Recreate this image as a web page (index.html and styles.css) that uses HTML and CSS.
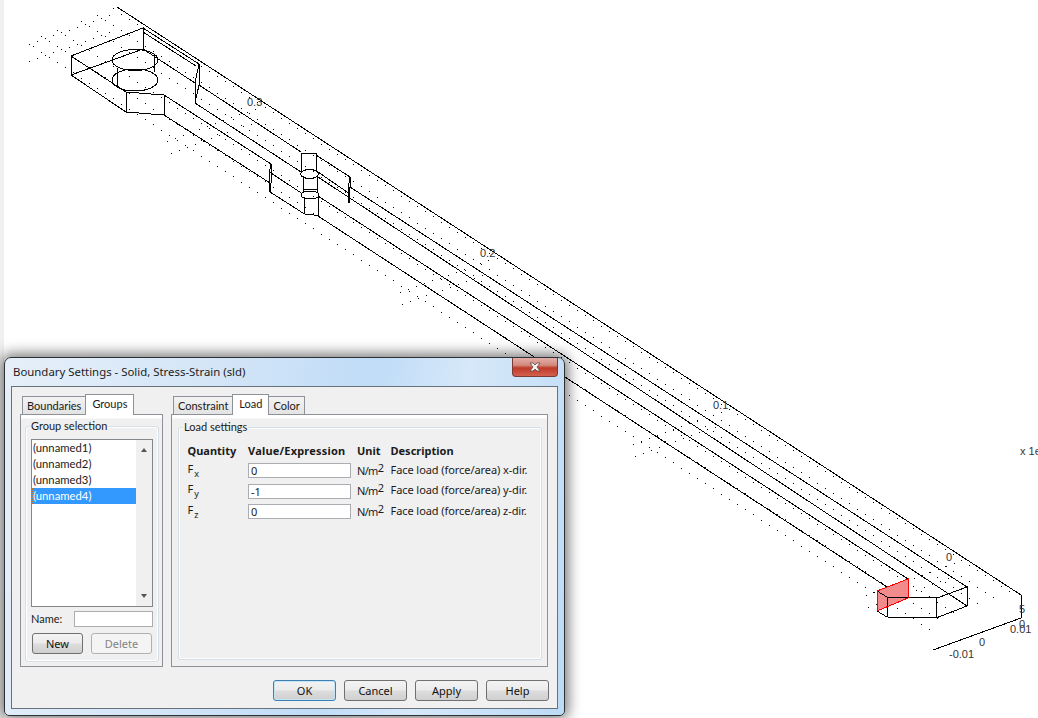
FILE: index.html
```html
<!DOCTYPE html>
<html lang="en">
<head>
<meta charset="utf-8">
<title>Boundary Settings</title>
<link rel="stylesheet" href="styles.css">
</head>
<body>
<main class="stage">
  <svg class="plot" width="1038" height="718" viewBox="0 0 1038 718">
    <path id="grid-dots" class="dots" d=""/>
    <polygon class="face" points="877,591 908,579 908,598 877,611"/>
    <g class="edges">
      <polyline points="117,7 1021,595 1021,618 933,650"/>
      <polygon points="71,56 143,28 143,49 71,75"/>
      <polyline points="71,56 126,92 164,95 164,115 126,112 71,75"/>
      <line x1="126" y1="92" x2="126" y2="112"/>
      <ellipse cx="135" cy="60" rx="23" ry="10.5"/>
      <ellipse cx="135" cy="80" rx="23" ry="11"/>
      <line x1="117" y1="68" x2="117" y2="86"/>
      <line x1="154" y1="55" x2="154" y2="72"/>
      <line x1="143" y1="28" x2="199" y2="64"/>
      <line x1="143" y1="32" x2="196" y2="66"/>
      <line x1="143" y1="49" x2="195" y2="83"/>
      <polygon points="199,64 199,85 195,103 195,83"/>
      <line x1="164" y1="95" x2="271" y2="164"/>
      <line x1="164" y1="115" x2="270" y2="183"/>
      <polygon points="271,164 271,183 270,192 269.500,172"/>
      <line x1="199" y1="85" x2="301" y2="152"/>
      <line x1="195" y1="103" x2="301" y2="172"/>
      <line x1="269.500" y1="172" x2="302" y2="193.500"/>
      <line x1="270" y1="192" x2="304.500" y2="214"/>
      <polyline points="301,172 301,153 316,153.500 316,172"/>
      <ellipse cx="309.500" cy="174" rx="9" ry="4.500"/>
      <line x1="303" y1="176" x2="303" y2="193"/>
      <line x1="317.500" y1="176" x2="317.500" y2="193"/>
      <line x1="303" y1="189" x2="317.500" y2="189"/>
      <ellipse cx="310" cy="195" rx="9" ry="4"/>
      <polyline points="304.500,197 304.500,214 318.500,215.500 318.500,197"/>
      <line x1="316" y1="155" x2="350" y2="177"/>
      <line x1="318" y1="172" x2="348.500" y2="193"/>
      <polygon points="350,177 350,187 349,203 348.500,186"/>
      <line x1="350" y1="187" x2="967" y2="587"/>
      <line x1="318" y1="177" x2="967" y2="606"/>
      <line x1="318" y1="196" x2="908" y2="579"/>
      <line x1="318" y1="216" x2="887" y2="587"/>
      <polyline points="877,591 887,597 937,598 967,587 967,606 936,618 887,617 877,611"/>
      <line x1="887" y1="597" x2="887" y2="617"/>
      <line x1="937" y1="598" x2="936" y2="618"/>
    </g>
    <polygon class="face-edge" points="877,591 908,579 908,598 877,611"/>
    <g class="ticks">
      <text x="247" y="106">0.3</text>
      <text x="480" y="257">0.2</text>
      <text x="713" y="409">0.1</text>
      <text x="946" y="561">0</text>
      <text x="1019" y="613">5</text>
      <text x="1019" y="628">0</text>
      <text x="1010" y="633">0.01</text>
      <text x="979" y="646">0</text>
      <text x="949" y="658">-0.01</text>
      <text x="1020" y="455">x 1e</text>
    </g>
  </svg>

  <section class="window">
    <header class="titlebar">
      <h1 class="title">Boundary Settings - Solid, Stress-Strain (sld)</h1>
      <button class="close" type="button" aria-label="Close">
        <svg width="12" height="10" viewBox="0 0 12 10"><path class="close-x" d="M1 1H4L6 3L8 1H11L8 5L11 9H8L6 7L4 9H1L4 5Z"/></svg>
      </button>
    </header>
    <div class="client">
      <div class="panes">
        <div class="column column-left">
          <div class="tabs">
            <span class="tab">Boundaries</span>
            <span class="tab tab-active">Groups</span>
          </div>
          <div class="pane">
            <div class="group">
              <span class="legend">Group selection</span>
              <div class="list">
                <ul class="items">
                  <li class="item">(unnamed1)</li>
                  <li class="item">(unnamed2)</li>
                  <li class="item">(unnamed3)</li>
                  <li class="item item-selected">(unnamed4)</li>
                </ul>
                <div class="scrollbar">
                  <span class="arrow arrow-up"></span>
                  <span class="arrow arrow-down"></span>
                </div>
              </div>
              <div class="name-row">
                <label class="name-label" for="group-name">Name:</label>
                <input class="field name-field" id="group-name" type="text">
              </div>
              <div class="group-buttons">
                <button class="btn btn-new" type="button">New</button>
                <button class="btn btn-delete" type="button" disabled>Delete</button>
              </div>
            </div>
          </div>
        </div>
        <div class="column column-right">
          <div class="tabs">
            <span class="tab">Constraint</span>
            <span class="tab tab-active">Load</span>
            <span class="tab">Color</span>
          </div>
          <div class="pane">
            <div class="group">
              <span class="legend">Load settings</span>
              <div class="settings">
                <b class="head">Quantity</b><b class="head head-value">Value/Expression</b><b class="head">Unit</b><b class="head">Description</b>
                <span class="qty">F<sub>x</sub></span><input class="field" type="text" value="0"><span class="unit">N/m<sup>2</sup></span><span class="desc">Face load (force/area) x-dir.</span>
                <span class="qty">F<sub>y</sub></span><input class="field" type="text" value="-1"><span class="unit">N/m<sup>2</sup></span><span class="desc">Face load (force/area) y-dir.</span>
                <span class="qty">F<sub>z</sub></span><input class="field" type="text" value="0"><span class="unit">N/m<sup>2</sup></span><span class="desc">Face load (force/area) z-dir.</span>
              </div>
            </div>
          </div>
        </div>
      </div>
      <div class="actions">
        <button class="btn btn-action btn-default" type="button">OK</button>
        <button class="btn btn-action" type="button">Cancel</button>
        <button class="btn btn-action" type="button">Apply</button>
        <button class="btn btn-action" type="button">Help</button>
      </div>
    </div>
  </section>
</main>
<script src="plot.js"></script>
</body>
</html>
```
FILE: styles.css
```css
* { box-sizing: border-box; }
html, body { margin: 0; padding: 0; }
body { overflow: hidden; font: 11px/14px "Noto Sans", "Liberation Sans", sans-serif; color: #1a1a1a; }

.stage {
  position: relative;
  width: 1038px;
  height: 718px;
  overflow: hidden;
  background: linear-gradient(90deg, #f0f0f0 4px, #fff 4px);
}
.plot { position: absolute; left: 0; top: 0; display: block; }
.edges * { fill: none; stroke: #000; stroke-width: 1; shape-rendering: crispEdges; }
.dots { fill: none; stroke: #000; stroke-width: 1; shape-rendering: crispEdges; }
.face { fill: #f28c8c; }
.face-edge { fill: none; stroke: #f00; stroke-width: 1; shape-rendering: crispEdges; }
.ticks text { font: 11px "Liberation Sans", sans-serif; fill: #333; }

.window {
  position: absolute;
  left: 4px;
  top: 357px;
  width: 561px;
  height: 359px;
  display: flex;
  flex-direction: column;
  padding: 0 6px 6px;
  border: 1px solid #2d3136;
  border-radius: 7px 7px 5px 5px;
  background: linear-gradient(100deg, #e6eff9 0%, #d3e5f7 35%, #c0dcf7 60%, #d6e8f9 75%, #bcdaf6 100%);
  box-shadow: 0 0 14px 3px rgba(0, 0, 0, .55);
}
.titlebar { display: flex; justify-content: space-between; align-items: flex-start; height: 28px; flex: none; }
.title { margin: 6px 0 0 2px; font: 400 11.4px/16px "Noto Sans", sans-serif; color: #1c1c1c; }
.close {
  width: 46px;
  height: 19px;
  margin: 0;
  padding: 0;
  display: flex;
  align-items: center;
  justify-content: center;
  border: 1px solid #7b3a32;
  border-top: 0;
  border-radius: 0 0 4px 4px;
  background: linear-gradient(#e3aea6 0%, #d2897e 40%, #bf3a28 55%, #d3604f 100%);
}
.close-x { fill: #f6f2f0; stroke: #5e4a48; stroke-width: .8; }

.client {
  flex: 1;
  display: flex;
  flex-direction: column;
  border: 1px solid #68727c;
  background: #f0f0f0;
}
.panes { display: flex; gap: 8px; height: 280px; padding: 7px 9px 0 8px; flex: none; }
.column { display: flex; flex-direction: column; }
.column-left { width: 143px; }
.column-right { width: 377px; }

.tabs { display: flex; align-items: flex-end; height: 20px; padding-left: 2px; flex: none; position: relative; z-index: 1; font-family: "Lato", sans-serif; font-size: 11px; }
.tab {
  height: 18px;
  padding: 2px 4px 0;
  border: 1px solid #8d9299;
  border-bottom: 0;
  margin-right: -1px;
  background: linear-gradient(#f3f3f3, #e3e3e3);
}
.tab-active { height: 21px; margin-bottom: -1px; padding: 2px 6px 0; background: #fff; position: relative; z-index: 1; }
.pane {
  flex: 1;
  display: flex;
  padding: 11px 3px 4px 4px;
  border: 1px solid #8d9299;
  background: linear-gradient(#fff 3px, #f0f0f0 4px);
}
.column-right .pane { padding: 12px 5px 6px 6px; }

.group {
  flex: 1;
  display: flex;
  flex-direction: column;
  padding: 0 5px;
  border: 1px solid #d5dfe5;
  border-radius: 3px;
  box-shadow: inset 0 0 0 1px #fff;
}
.legend { align-self: flex-start; margin: -8px 0 0 -1px; padding: 0 1px; background: #f0f0f0; font-family: "Lato", sans-serif; font-size: 11px; }

.list {
  display: flex;
  height: 168px;
  margin-top: 6px;
  border: 1px solid #82878c;
  background: #fff;
}
.items { flex: 1; margin: 0; padding: 0; list-style: none; font-family: "Lato", sans-serif; font-size: 11.3px; }
.item { height: 16px; padding-left: 1px; line-height: 16px; }
.item-selected { background: #3399ff; color: #fff; border: 1px dotted #d0741c; padding-left: 0; line-height: 14px; }
.scrollbar {
  width: 16px;
  display: flex;
  flex-direction: column;
  justify-content: space-between;
  align-items: center;
  padding: 8px 0;
  background: #f0f0f0;
}
.arrow { width: 0; height: 0; border-left: 3.5px solid transparent; border-right: 3.5px solid transparent; }
.arrow-up { border-bottom: 4px solid #555; }
.arrow-down { border-top: 4px solid #555; }

.name-row { display: flex; align-items: center; justify-content: space-between; margin-top: 4px; }
.name-label { font-family: "Lato", sans-serif; font-size: 11px; }
.field {
  display: block;
  width: 100%;
  height: 15px;
  margin: 0;
  padding: 0 2px;
  border: 1px solid #abadb3;
  background: #fff;
  font: inherit;
  color: inherit;
  outline: none;
}
.name-field { width: 79px; height: 16px; }
.group-buttons { display: flex; justify-content: space-between; margin-top: 6px; padding: 0 1px; }

.btn {
  height: 21px;
  padding: 0;
  border: 1px solid #707070;
  border-radius: 3px;
  font: inherit;
  color: #111;
  background: linear-gradient(#f3f3f3 0%, #ebebeb 48%, #dddddd 52%, #cfcfcf 100%);
}
.btn-new { width: 51px; }
.btn-delete { width: 61px; border-color: #adb2b5; background: #f4f4f4; color: #838383; }
.btn-action { width: 63px; }
.btn-default { border-color: #3c7fb1; box-shadow: inset 0 0 0 1px #c4e5f6; }
.actions { display: flex; justify-content: flex-end; gap: 8px; padding: 13px 8px 0 0; }

.settings {
  display: grid;
  grid-template-columns: 60.5px 103px 39.5px 1fr;
  grid-template-rows: 14px 15.5px 15.5px 15.5px;
  column-gap: 0;
  row-gap: 5px;
  margin: 10px 0 0 3.5px;
  align-items: center;
}
.settings > *:nth-child(4n+3) { margin-left: 6px; }
.head { font-weight: 700; }
.head-value { letter-spacing: .2px; white-space: nowrap; }
.desc { letter-spacing: -.07px; position: relative; top: -1px; white-space: nowrap; }
.qty { font-size: 11px; position: relative; top: -2px; }
.qty sub { font-size: 9px; line-height: 0; vertical-align: -4px; margin-left: 1px; }
.unit { white-space: nowrap; letter-spacing: -.7px; }
.unit sup { font-size: 11px; line-height: 0; vertical-align: 3px; }
```
FILE: plot.js
```js
// Grid of the 3D plot: rows of single-pixel dots, [start x, start y, step x, step y, count].
var alongLength = [
  [113, 8.4], [97, 14.5], [81, 20.6], [57, 29.6], [41, 35.7], [33, 46.4]
].map(function (p) { return [p[0], p[1], 8, 5.2, 113]; });

var acrossWidth = [
  [29, 44, 11], [29, 61, 11],
  [167, 140.5, 12], [171, 152.5, 11],
  [400, 292, 12], [402, 304, 11],
  [633, 443.5, 12], [635, 455.5, 11],
  [866, 595, 12], [868, 607, 11]
].map(function (p) { return [p[0], p[1], 8, -2.9, p[2]]; });

var d = '';
alongLength.concat(acrossWidth).forEach(function (row) {
  for (var i = 0; i < row[4]; i++) {
    d += 'M' + (row[0] + i * row[2]) + ' ' + (Math.round(row[1] + i * row[3]) + 0.5) + 'h1';
  }
});
document.getElementById('grid-dots').setAttribute('d', d);
```
